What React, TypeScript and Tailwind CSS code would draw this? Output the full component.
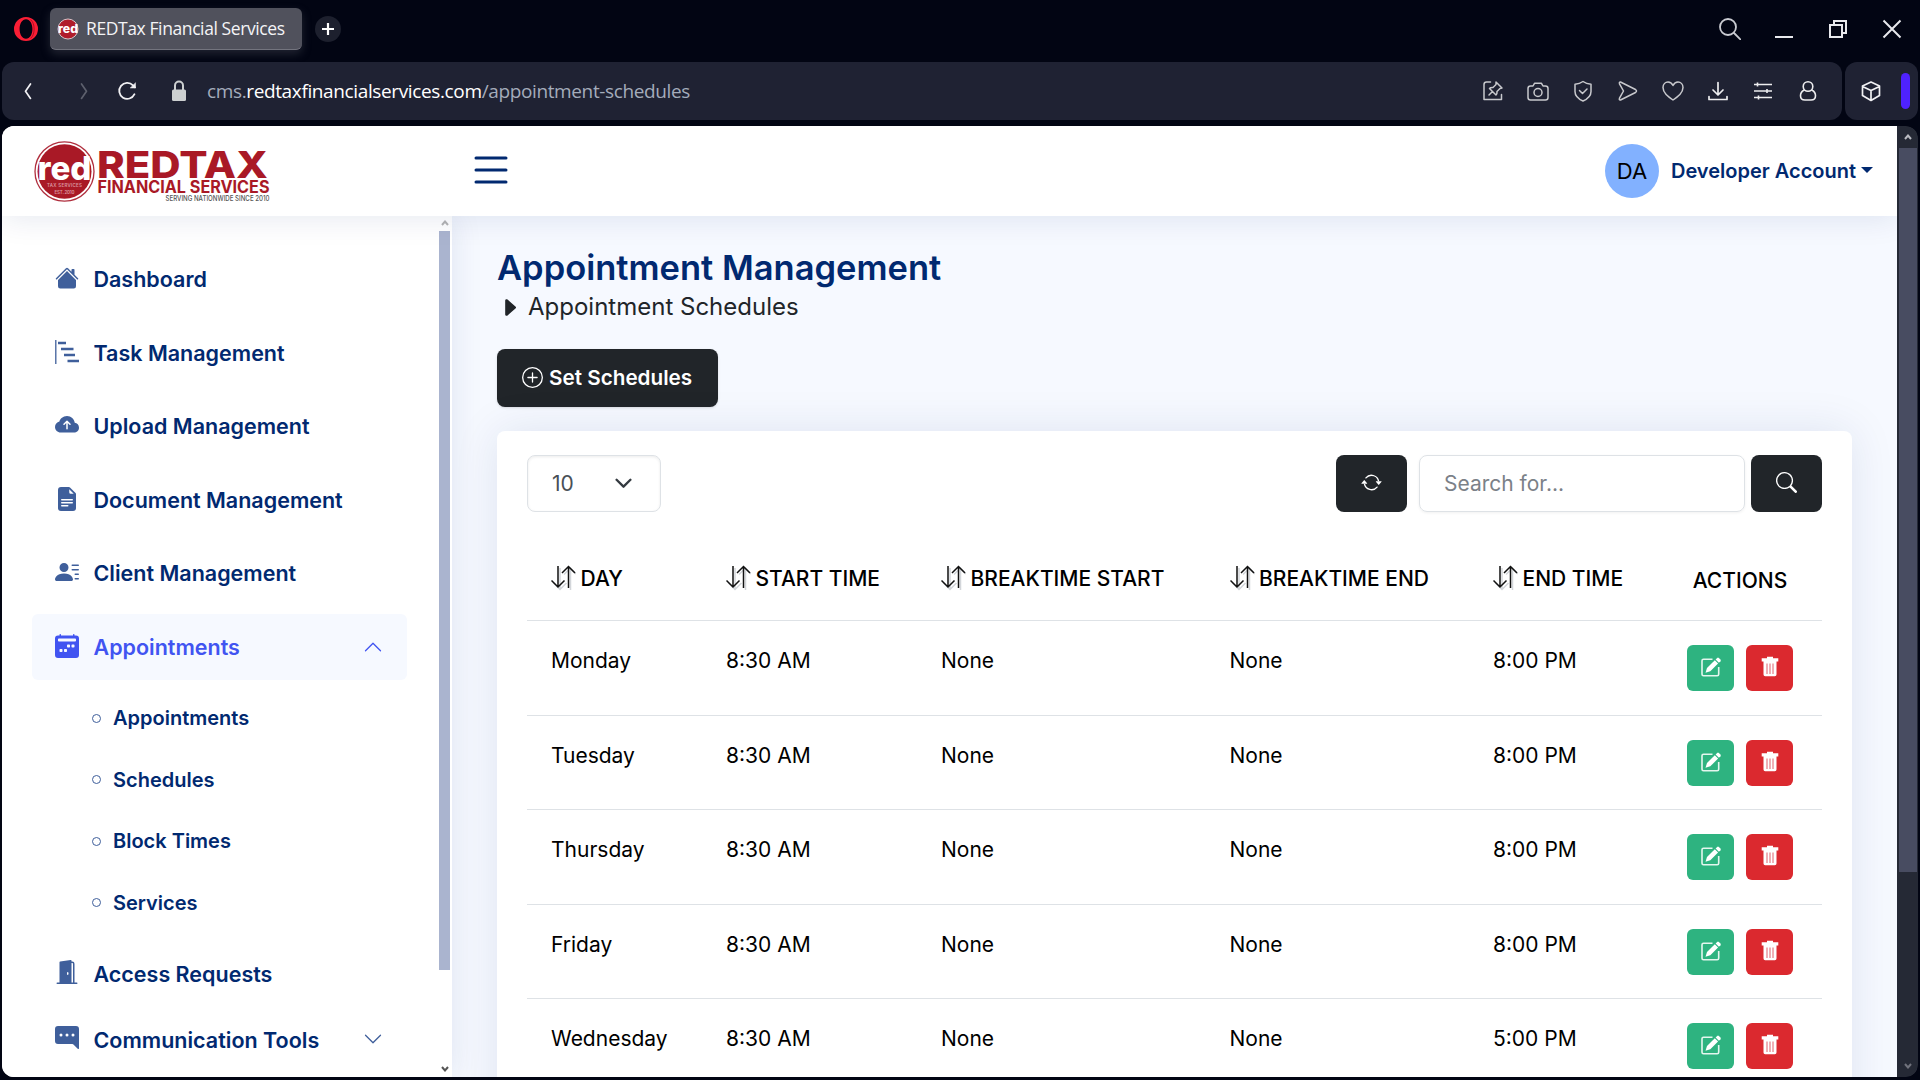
import type { ComponentType, ReactNode } from "react";
import {
  BsArrowRepeat,
  BsCalendar2WeekFill,
  BsCaretRightFill,
  BsChatRightDotsFill,
  BsChevronDown,
  BsChevronUp,
  BsCloudArrowUpFill,
  BsDoorOpenFill,
  BsFileEarmarkTextFill,
  BsHouseFill,
  BsList,
  BsPersonLinesFill,
  BsPlusCircle,
  BsSearch,
} from "react-icons/bs";

type IconType = ComponentType<{ className?: string }>;

function Line({ children, className = "", size = 22, w = 1.5 }: { children: ReactNode; className?: string; size?: number; w?: number }) {
  return (
    <svg
      viewBox="0 0 22 22"
      width={size}
      height={size}
      fill="none"
      stroke="currentColor"
      strokeWidth={w}
      strokeLinecap="round"
      strokeLinejoin="round"
      className={"shrink-0 " + className}
    >
      {children}
    </svg>
  );
}

function TabStrip() {
  return (
    <div className="flex h-[62px] shrink-0 items-start pl-[13px] pr-[17px] pt-2">
      <svg viewBox="0 0 26 26" width="26" height="26" className="mt-2 shrink-0">
        <path
          fillRule="evenodd"
          fill="#fa1e35"
          d="M13 1a12 12 0 1 1 0 24a12 12 0 1 1 0-24zM13 3.2c-3.800 0-6.400 4.400-6.400 9.800s2.600 9.800 6.400 9.800s6.400-4.400 6.400-9.800s-2.600-9.800-6.400-9.800z"
        />
        <path d="M17.500 3.600c2.600 2 3.600 5.400 3.600 9.400s-1 7.400-3.600 9.400" fill="none" stroke="#b50d22" strokeWidth="1" />
      </svg>
      <div className="ml-[11px] flex h-[42px] w-[252px] items-center rounded-md border-b border-[#73747e] bg-[#50515c] pl-[7px] shadow-[0_4px_10px_rgba(80,82,95,0.4)]">
        <svg viewBox="0 0 22 22" width="22" height="22" className="shrink-0">
          <circle cx="11" cy="11" r="10" fill="#b01c2a" stroke="#d9c3c8" strokeWidth="1" />
          <text x="11" y="14.500" textAnchor="middle" textLength="20" lengthAdjust="spacingAndGlyphs" fontFamily="Inter" fontWeight="800" fontSize="12" fill="#fff">
            red
          </text>
        </svg>
        <span className="ml-[7px] whitespace-nowrap text-[17.500px] tracking-[-0.4px] text-[#f4f4f6]">REDTax Financial Services</span>
      </div>
      <div className="ml-[13px] mt-2 flex h-[26px] w-[26px] items-center justify-center rounded-full bg-[#1d202e] text-white">
        <svg viewBox="0 0 12 12" width="12" height="12">
          <path d="M6 0v12M0 6h12" stroke="currentColor" strokeWidth="2.200" />
        </svg>
      </div>
      <div className="ml-auto flex items-center gap-8 pt-[10px] text-[#e8e9ed]">
        <Line className="text-[#c9cbd1]" w={1.8}>
          <circle cx="9" cy="9" r="8" />
          <path d="M15 15l6.500 6.500" />
        </Line>
        <Line w={2}>
          <path d="M2 19h18" strokeLinecap="butt" />
        </Line>
        <Line w={2}>
          <path d="M3 7h12v12H3zM7 6V3h12v12h-3" strokeLinejoin="miter" />
        </Line>
        <Line w={2}>
          <path d="M2.500 2.500l17 17M19.500 2.500l-17 17" strokeLinecap="butt" />
        </Line>
      </div>
    </div>
  );
}

function AddressBar() {
  return (
    <div className="flex h-[58px] shrink-0 gap-[3px] pl-[2px] pr-[2px]">
      <div className="flex flex-1 items-center rounded-xl bg-[#1f2233] pl-[14px] pr-[23px] text-[#f1f1f4]">
        <Line w={1.700}>
          <path d="M14.500 4L9.500 11.200l5 7.200" />
        </Line>
        <Line w={1.700} className="ml-[35px] text-[#5d606d]">
          <path d="M8.500 4l5 7.200l-5 7.200" />
        </Line>
        <Line w={1.800} className="ml-[21px]">
          <path d="M18.500 14.200A8 8 0 1 1 17 5.300l2 2" />
          <path d="M19.500 3v5H14.500z" fill="currentColor" strokeWidth="0.500" />
        </Line>
        <svg viewBox="0 0 16 22" width="16" height="22" className="ml-[33px] shrink-0 text-[#cdd0d1]">
          <path d="M4 10V5.500a4 4 0 0 1 8 0V10" fill="none" stroke="currentColor" strokeWidth="2" />
          <rect x="1" y="9.500" width="14" height="11.500" rx="1.500" fill="currentColor" />
        </svg>
        <div className="ml-[20px] whitespace-nowrap text-[19px] tracking-[-0.370px] text-[#a4acbb]">
          cms.<span className="text-white">redtaxfinancialservices.com</span>/appointment-schedules
        </div>
        <div className="ml-auto flex items-center gap-[23px] text-[#c8c9cd]">
          <Line>
            <path d="M8.500 2H4.500Q2 2 2 4.500V19.500H19.500V14.500" />
            <path d="M14 2l6 6l-2 .5l-3 3q.2 2.500-1 3.500l-6.500-6.500q1-1.200 3.500-1l3-3zM10.500 11.500L7 15" />
          </Line>
          <Line>
            <path d="M3.500 6H6l1.500-2.700h7L16 6h2.500Q21 6 21 8.500v9Q21 20 18.500 20h-15Q1 20 1 17.500v-9Q1 6 3.500 6z" />
            <circle cx="11" cy="12.500" r="4" />
          </Line>
          <Line>
            <path d="M11 1.500c2.500 1.800 5 2.500 8 2.700v7.300c0 4.500-3.500 7.500-8 9.500c-4.500-2-8-5-8-9.500V4.200c3-.2 5.500-.9 8-2.700z" />
            <path d="M7.500 10.500l3 3l4.500-4.500" />
          </Line>
          <Line>
            <path d="M3.500 2l15 7.500q2 1.500 0 3l-15 7.500q-1.700.3-1-1.800L6.500 11L2.500 3.800Q2 1.800 3.500 2z" />
          </Line>
          <Line>
            <path d="M11 20C6 16.500 1 13 1 7.500C1 4 3.500 2 6 2s4 1.500 5 3.500C12 3.500 13.500 2 16 2s5 2 5 5.500c0 5.500-5 9-10 12.500z" />
          </Line>
          <Line w={1.700} className="text-[#ededef]">
            <path d="M11 2.500v12M6 10l5 5l5-5M2 16.500V19.500H20V16.500" />
          </Line>
          <Line w={1.600} className="text-[#ededef]">
            <path d="M2 4.500h18M2 11h18M2 17.500h18M5.500 2.500v4M15 9v4M6.500 15.500v4" strokeLinecap="butt" />
          </Line>
          <Line w={1.600} className="text-[#ededef]">
            <circle cx="11" cy="6.500" r="4.800" />
            <path d="M7 10.300C4.500 11.500 3.500 13.500 3.500 15.700C3.500 18.500 5 20 8 20h6c3 0 4.500-1.500 4.500-4.300c0-2.200-1-4.200-3.500-5.400" />
          </Line>
        </div>
      </div>
      <div className="flex w-[73px] items-center rounded-xl bg-[#1f2233] pl-[15px] text-[#f1f1f4]">
        <Line w={1.700}>
          <path d="M11 2l8.500 4v9.500L11 20.500l-8.500-5V6zM2.500 6.500L11 10.500l8.500-4M11 10.500v10" />
        </Line>
        <div className="ml-[19px] h-9 w-[9px] rounded-full bg-[#4f22ff]" />
      </div>
    </div>
  );
}

function Logo() {
  return (
    <svg viewBox="0 0 240 68" width="240" height="68" className="shrink-0" fontFamily="Inter, sans-serif">
      <ellipse cx="32.500" cy="34.500" rx="29.500" ry="29.700" fill="#fff" stroke="#a8192a" strokeWidth="1.300" opacity="0.9" />
      <ellipse cx="32.500" cy="34.500" rx="27" ry="27.200" fill="#a91926" />
      <text x="5.500" y="43" textLength="54" lengthAdjust="spacingAndGlyphs" fontWeight="800" fontSize="33" fill="#fff">
        red
      </text>
      <text x="15" y="50" textLength="35" fontSize="4.500" fontWeight="600" fill="#dc9aa1">
        TAX SERVICES
      </text>
      <text x="22.500" y="56.500" textLength="20" fontSize="4.500" fontWeight="600" fill="#dc9aa1">
        EST. 2010
      </text>
      <text x="65" y="41" textLength="171" lengthAdjust="spacingAndGlyphs" fontWeight="800" fontSize="37" fill="#a91926">
        REDTAX
      </text>
      <text x="65.500" y="56.300" textLength="172" lengthAdjust="spacingAndGlyphs" fontWeight="700" fontSize="17" fill="#a91926">
        FINANCIAL SERVICES
      </text>
      <text x="133.500" y="64" textLength="104" lengthAdjust="spacingAndGlyphs" fontWeight="500" fontSize="7.500" fill="#555">
        SERVING NATIONWIDE SINCE 2010
      </text>
    </svg>
  );
}

function Header() {
  return (
    <header className="relative z-20 flex h-[90px] shrink-0 items-center bg-white pl-[30px] pr-[24px] shadow-[0_3px_30px_rgba(1,41,112,0.1)]">
      <Logo />
      <BsList className="ml-[195px] mt-[-2px] h-12 w-12 text-[#012970]" />
      <div className="ml-auto flex items-center text-[#012970]">
        <div className="flex h-[54px] w-[54px] items-center justify-center rounded-full bg-[#82b1ff] text-[22px] text-black">DA</div>
        <span className="ml-3 whitespace-nowrap text-[20px] font-semibold">Developer Account</span>
        <span className="ml-[5px] mt-[-2px] border-x-[6px] border-t-[6px] border-x-transparent border-t-[#012970]" />
      </div>
    </header>
  );
}

function GanttIcon({ className }: { className?: string }) {
  return (
    <svg viewBox="0 0 24 24" className={className} fill="none" stroke="currentColor">
      <path d="M.8 0v24" strokeWidth="1.300" />
      <path d="M3 3h8M6 9h12.500M9 15h11M12.500 21H24" strokeWidth="2.400" />
    </svg>
  );
}

function NavItem({ icon: Icon, label, active, chevron }: { icon: IconType; label: string; active?: boolean; chevron?: "up" | "down" }) {
  return (
    <div
      className={
        "flex h-[66px] items-center rounded-md pl-[22.500px] pr-6 text-[21.500px] font-semibold " +
        (active ? "bg-[#f6f9ff] text-[#4154f1]" : "text-[#012970]")
      }
    >
      <Icon className={"mt-[-3px] h-6 w-6 shrink-0 " + (active ? "text-[#4154f1]" : "text-[#3f5f9b]")} />
      <span className="ml-[15px] whitespace-nowrap">{label}</span>
      {chevron === "up" && <BsChevronUp className="ml-auto h-5 w-5" />}
      {chevron === "down" && <BsChevronDown className="ml-auto mt-[-2px] h-5 w-5 text-[#3f5f9b]" />}
    </div>
  );
}

const topItems: [IconType, string][] = [
  [BsHouseFill, "Dashboard"],
  [GanttIcon, "Task Management"],
  [BsCloudArrowUpFill, "Upload Management"],
  [BsFileEarmarkTextFill, "Document Management"],
  [BsPersonLinesFill, "Client Management"],
];

function Sidebar() {
  return (
    <aside className="relative z-10 flex w-[450px] shrink-0 bg-white shadow-[0_0_30px_rgba(1,41,112,0.1)]">
      <nav className="ml-[30px] w-[375px] pt-[30.500px]">
        <div className="flex flex-col gap-[7.500px]">
          {topItems.map(([icon, label]) => (
            <NavItem key={label} icon={icon} label={label} />
          ))}
          <NavItem icon={BsCalendar2WeekFill} label="Appointments" active chevron="up" />
        </div>
        <ul className="py-[7.300px]">
          {["Appointments", "Schedules", "Block Times", "Services"].map((s) => (
            <li key={s} className="flex h-[61.600px] items-center pl-[60px] text-[20px] font-semibold text-[#012970]">
              <span className="h-[9px] w-[9px] rounded-full border border-[#3f5f9b]" />
              <span className="ml-3">{s}</span>
            </li>
          ))}
        </ul>
        <NavItem icon={BsDoorOpenFill} label="Access Requests" />
        <NavItem icon={BsChatRightDotsFill} label="Communication Tools" chevron="down" />
      </nav>
      <div className="ml-auto mr-[2px] flex w-[11px] flex-col items-center pb-[5px] pt-1">
        <svg viewBox="0 0 8 6" width="8" height="6" className="shrink-0">
          <path d="M1 5l3-3.500l3 3.500" fill="none" stroke="#b4b4b4" strokeWidth="2" />
        </svg>
        <div className="mt-[5px] h-[739px] w-[11px] shrink-0 bg-[#aab4cf]" />
        <svg viewBox="0 0 8 6" width="8" height="6" className="mt-auto shrink-0">
          <path d="M1 1l3 3.500l3-3.500" fill="none" stroke="#555" strokeWidth="2" />
        </svg>
      </div>
    </aside>
  );
}

function SortIcon() {
  return (
    <svg viewBox="0 0 25 26" width="25" height="26" fill="none" className="shrink-0" strokeWidth="1.500">
      <path d="M9 3v20.500M2.500 18l6.500 6.500l6.500-6.500M19.500 25V3.500M13 9.500l6.500-6.500l5.500 6" stroke="#d3d6da" />
      <path d="M7 1v20.500M.5 15.500L7 22l6.500-6.500M17.500 23V1.500M11 8l6.500-6.500L24 8" stroke="#111" />
    </svg>
  );
}

function EditIcon() {
  return (
    <svg viewBox="0 0 22 21" width="22" height="21" fill="none" className="-mt-px">
      <path d="M12.500 2.200H3.500Q2 2.200 2 3.700V17.300Q2 18.800 3.500 18.800H17.200Q18.700 18.800 18.700 17.300V10" stroke="#e4f6ee" strokeWidth="1.600" />
      <path d="M5.500 15.800l1.500-4.800L14.800 3.300l3.300 3.300L10.300 14.300z" fill="#fff" />
      <path d="M15.600 2.500l1.600-1.600q.8-.6 1.600 0l1.700 1.700q.6.800 0 1.600l-1.600 1.600z" fill="#fff" />
    </svg>
  );
}

function TrashIcon() {
  return (
    <svg viewBox="0 0 18 21" width="18" height="21" fill="none">
      <path d="M6 .8h6v1.400h5.300v3.300H15.500V18.500q0 1.700-1.700 1.700H4.200q-1.700 0-1.700-1.700V5.500H.7V2.200H6z" fill="#fff" />
      <path d="M6 7.500v10.500M9 7.500v10.500M12 7.500v10.500" stroke="#e0606c" strokeWidth="1" />
    </svg>
  );
}

const columns = ["DAY", "START TIME", "BREAKTIME START", "BREAKTIME END", "END TIME"];
const rows = [
  ["Monday", "8:30 AM", "None", "None", "8:00 PM"],
  ["Tuesday", "8:30 AM", "None", "None", "8:00 PM"],
  ["Thursday", "8:30 AM", "None", "None", "8:00 PM"],
  ["Friday", "8:30 AM", "None", "None", "8:00 PM"],
  ["Wednesday", "8:30 AM", "None", "None", "5:00 PM"],
];
const grid = "grid grid-cols-[175px_215px_288.5px_263.5px_194px_1fr] pl-6";

function Table() {
  return (
    <div className="mt-[14px] text-[21px] text-black">
      <div className={grid + " h-[95px] border-b border-[#dee2e6] font-medium"}>
        {columns.map((c) => (
          <div key={c} className="mt-[39px] flex h-[26px] items-center gap-[4.500px] whitespace-nowrap">
            <SortIcon />
            <span className="mt-[1px]">{c}</span>
          </div>
        ))}
        <div className="mt-[42px] h-[26px] w-[106px] text-center leading-[26px]">ACTIONS</div>
      </div>
      {rows.map((r) => (
        <div key={r[0]} className={grid + " h-[94.500px] border-b border-[#dee2e6]"}>
          {r.map((v, i) => (
            <div key={i} className="pt-6 leading-8">
              {v}
            </div>
          ))}
          <div className="flex gap-3 pt-6 text-white">
            <div className="flex h-[46px] w-[47px] items-center justify-center rounded-md bg-[#2eb380]">
              <EditIcon />
            </div>
            <div className="flex h-[46px] w-[47px] items-center justify-center rounded-md bg-[#db292f] pb-[3px]">
              <TrashIcon />
            </div>
          </div>
        </div>
      ))}
    </div>
  );
}

function Main() {
  return (
    <main className="flex min-w-0 flex-1 flex-col overflow-hidden bg-[#f6f9ff] pl-[45px] pr-[45px] pt-[30px]">
      <h1 className="h-[43px] shrink-0 whitespace-nowrap text-[34.500px] font-semibold leading-[43px] text-[#012970]">Appointment Management</h1>
      <div className="flex h-10 shrink-0 items-center text-2xl text-[#212529]">
        <BsCaretRightFill className="ml-[1px] mt-[-4px] h-[23px] w-[23px]" />
        <span className="ml-[7px] h-9">Appointment Schedules</span>
      </div>
      <button className="mt-5 flex h-[58px] w-[221px] shrink-0 items-center rounded-lg bg-[#212529] pl-[25px] text-[20.700px] font-semibold text-white shadow-sm">
        <BsPlusCircle className="mt-[-2px] h-[21px] w-[21px]" />
        <span className="ml-[6px] whitespace-nowrap">Set Schedules</span>
      </button>
      <section className="mt-6 h-[700px] shrink-0 rounded-lg bg-white px-[30px] pt-6 shadow-[0_0_45px_rgba(1,41,112,0.1)]">
        <div className="flex h-[57px]">
          <div className="flex w-[134px] items-center justify-between rounded-lg border border-[#dee2e6] pl-6 pr-7 text-[21px] text-[#495057] shadow-[inset_0_1px_3px_rgba(0,0,0,0.08)]">
            10
            <svg viewBox="0 0 16 16" width="17" height="17" fill="none" stroke="#343a40" strokeWidth="2.200" strokeLinecap="round" strokeLinejoin="round">
              <path d="M1.500 4.500l6.500 6.500l6.500-6.500" />
            </svg>
          </div>
          <div className="ml-auto flex w-[71px] items-center justify-center rounded-lg bg-[#212529] text-white">
            <BsArrowRepeat className="mt-[-2px] h-[21px] w-[21px]" />
          </div>
          <div className="ml-3 flex w-[326px] items-center rounded-lg border border-[#dee2e6] pl-6 text-[21px] text-[#7b8188] shadow-[0_1px_3px_rgba(0,0,0,0.06)]">
            Search for...
          </div>
          <div className="ml-[6px] flex w-[71px] items-center justify-center rounded-lg bg-[#212529] text-white">
            <BsSearch className="mt-[-2px] h-[21px] w-[21px]" />
          </div>
        </div>
        <Table />
      </section>
    </main>
  );
}

function PageScrollbar() {
  return (
    <div className="relative z-30 flex w-[21px] shrink-0 flex-col items-center rounded-r-xl bg-[#252935] pb-2 pt-2">
      <svg viewBox="0 0 8 6" width="8" height="6" className="shrink-0">
        <path d="M1 5l3-3.500l3 3.500" fill="none" stroke="#b9bac0" strokeWidth="2" />
      </svg>
      <div className="mt-2 h-[724px] w-[18px] shrink-0 bg-[#484c61]" />
      <svg viewBox="0 0 8 6" width="8" height="6" className="mt-auto shrink-0">
        <path d="M1 1l3 3.500l3-3.500" fill="none" stroke="#70727c" strokeWidth="2" />
      </svg>
    </div>
  );
}

export default function App() {
  return (
    <div className="flex h-[1080px] w-[1920px] flex-col overflow-hidden bg-[#020513] font-['Open_Sans',sans-serif]">
      <TabStrip />
      <AddressBar />
      <div className="mb-[3px] ml-[2px] mr-[2px] mt-[6px] flex min-h-0 flex-1 overflow-hidden rounded-xl font-['Inter',sans-serif]">
        <div className="flex min-w-0 flex-1 flex-col overflow-hidden bg-white">
          <Header />
          <div className="flex min-h-0 flex-1">
            <Sidebar />
            <Main />
          </div>
        </div>
        <PageScrollbar />
      </div>
    </div>
  );
}
